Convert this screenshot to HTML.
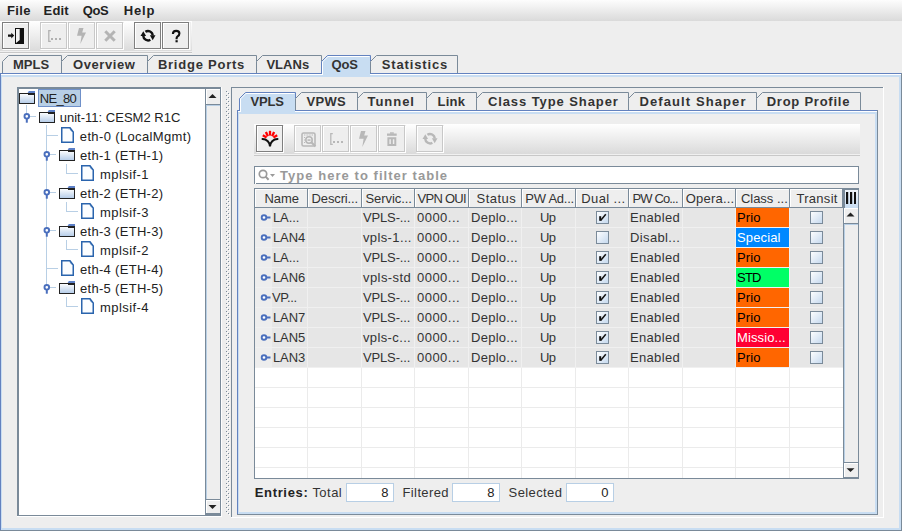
<!DOCTYPE html><html><head><meta charset="utf-8"><style>html,body{margin:0;padding:0;width:902px;height:531px;overflow:hidden;background:#eeeeee;}body{position:relative;font-family:"Liberation Sans",sans-serif;}body div,body svg{position:absolute;box-sizing:border-box;}</style></head><body>
<div style="left:0px;top:0px;width:902px;height:21px;background:linear-gradient(#fdfdfd,#dadada)"></div>
<div style="left:7.00px;top:3px;line-height:15px;font-size:13px;color:#222;letter-spacing:0.333px;white-space:pre;font-weight:bold;">File</div>
<div style="left:43.60px;top:3px;line-height:15px;font-size:13px;color:#222;letter-spacing:0.133px;white-space:pre;font-weight:bold;">Edit</div>
<div style="left:82.80px;top:3px;line-height:15px;font-size:13px;color:#222;letter-spacing:-0.400px;white-space:pre;font-weight:bold;">QoS</div>
<div style="left:123.70px;top:3px;line-height:15px;font-size:13px;color:#222;letter-spacing:0.833px;white-space:pre;font-weight:bold;">Help</div>
<div style="left:0px;top:21px;width:192px;height:31px;background:linear-gradient(#ffffff,#dadada)"></div>
<div style="left:0px;top:51px;width:192px;height:1px;background:#f0f0f0"></div>
<div style="left:0px;top:52px;width:192px;height:1px;background:#c8c8c8"></div>
<div style="left:0px;top:53px;width:192px;height:1px;background:#f6f6f6"></div>
<div style="left:2px;top:22px;width:28px;height:28px;background:#eeeeee"></div>
<div style="left:40px;top:22px;width:84px;height:28px;background:#eeeeee"></div>
<div style="left:134px;top:22px;width:57px;height:28px;background:#eeeeee"></div>
<div style="left:3px;top:23px;width:27px;height:27px;box-shadow:inset 0 0 0 1px #ffffff"></div>
<div style="left:2px;top:22px;width:27px;height:27px;box-shadow:inset 0 0 0 1px #7f7f7f"></div>
<div style="left:41px;top:23px;width:27px;height:27px;box-shadow:inset 0 0 0 1px #ffffff"></div>
<div style="left:40px;top:22px;width:27px;height:27px;box-shadow:inset 0 0 0 1px #c8c8c8"></div>
<div style="left:69px;top:23px;width:27px;height:27px;box-shadow:inset 0 0 0 1px #ffffff"></div>
<div style="left:68px;top:22px;width:27px;height:27px;box-shadow:inset 0 0 0 1px #c8c8c8"></div>
<div style="left:97px;top:23px;width:27px;height:27px;box-shadow:inset 0 0 0 1px #ffffff"></div>
<div style="left:96px;top:22px;width:27px;height:27px;box-shadow:inset 0 0 0 1px #c8c8c8"></div>
<div style="left:135px;top:23px;width:27px;height:27px;box-shadow:inset 0 0 0 1px #ffffff"></div>
<div style="left:134px;top:22px;width:27px;height:27px;box-shadow:inset 0 0 0 1px #7f7f7f"></div>
<div style="left:163px;top:23px;width:27px;height:27px;box-shadow:inset 0 0 0 1px #ffffff"></div>
<div style="left:162px;top:22px;width:27px;height:27px;box-shadow:inset 0 0 0 1px #7f7f7f"></div>
<svg style="left:2px;top:22px" width="27" height="27" viewBox="0 0 27 27"><rect x="13" y="6" width="9" height="16" fill="#111"/><polygon points="14,7 17.7,7 17.7,18 14,21" fill="#f2f2f2"/><polygon points="6,12.4 9.3,12.4 9.3,10.7 12.2,13.6 9.3,16.5 9.3,14.8 6,14.8" fill="#111"/></svg>
<svg style="left:40px;top:22px" width="27" height="27" viewBox="0 0 27 27"><path d="M10.8 8.6 H8.8 V19.4 H10.8" stroke="#b0b0b0" stroke-width="1.3" fill="none"/><rect x="11" y="16" width="2" height="2" fill="#b0b0b0"/><rect x="15" y="16" width="2" height="2" fill="#b0b0b0"/><rect x="19" y="16" width="2" height="2" fill="#b0b0b0"/></svg>
<svg style="left:68px;top:22px" width="27" height="27" viewBox="0 0 27 27"><polygon points="11,6 15.5,6 14.2,10.5 18,10.5 12.3,22 13.6,13.8 9,13.8" fill="#b4b4b4"/></svg>
<svg style="left:96px;top:22px" width="27" height="27" viewBox="0 0 27 27"><path d="M9.3 9.3 L18.7 18.7 M18.7 9.3 L9.3 18.7" stroke="#b4b4b4" stroke-width="3"/></svg>
<svg style="left:134px;top:22px" width="27" height="27" viewBox="0 0 27 27"><path d="M11.39 9.79 A4.7 4.7 0 0 1 18.7 13.5" stroke="#111" stroke-width="2.4" fill="none"/><path d="M16.35 17.77 A4.7 4.7 0 0 1 9.3 13.9" stroke="#111" stroke-width="2.4" fill="none"/><polygon points="15.9,13.3 21.5,13.3 18.7,18.2" fill="#111"/><polygon points="6.5,14.1 12.1,14.1 9.3,9.2" fill="#111"/></svg>
<svg style="left:162px;top:22px" width="27" height="27" viewBox="0 0 27 27"><path d="M10.9 12.1 Q10.9 8.9 14.2 8.9 Q17.4 8.9 17.4 11.6 Q17.4 13.3 15.6 14.4 Q14.6 15.1 14.6 16.3 V17.2" stroke="#111" stroke-width="2.1" fill="none"/><rect x="13.5" y="18.2" width="2.2" height="2.1" fill="#111"/></svg>
<div style="left:0px;top:74px;width:902px;height:457px;background:#eeeeee"></div>
<svg style="left:2px;top:55px" width="60" height="20" viewBox="0 0 60 20"><polygon points="0.5,6.5 6.5,0.5 59.5,0.5 59.5,19 0.5,19" fill="#eeeeee" stroke="#7a8a99" stroke-width="1"/></svg>
<div style="left:13.00px;top:57px;line-height:15px;font-size:13px;color:#333333;letter-spacing:0.000px;white-space:pre;font-weight:bold;">MPLS</div>
<svg style="left:61px;top:55px" width="87" height="20" viewBox="0 0 87 20"><polygon points="0.5,6.5 6.5,0.5 86.5,0.5 86.5,19 0.5,19" fill="#eeeeee" stroke="#7a8a99" stroke-width="1"/></svg>
<div style="left:73.00px;top:57px;line-height:15px;font-size:13px;color:#333333;letter-spacing:0.571px;white-space:pre;font-weight:bold;">Overview</div>
<svg style="left:147px;top:55px" width="110" height="20" viewBox="0 0 110 20"><polygon points="0.5,6.5 6.5,0.5 109.5,0.5 109.5,19 0.5,19" fill="#eeeeee" stroke="#7a8a99" stroke-width="1"/></svg>
<div style="left:157.90px;top:57px;line-height:15px;font-size:13px;color:#333333;letter-spacing:0.764px;white-space:pre;font-weight:bold;">Bridge Ports</div>
<svg style="left:256px;top:55px" width="66" height="20" viewBox="0 0 66 20"><polygon points="0.5,6.5 6.5,0.5 65.5,0.5 65.5,19 0.5,19" fill="#eeeeee" stroke="#7a8a99" stroke-width="1"/></svg>
<div style="left:266.40px;top:57px;line-height:15px;font-size:13px;color:#333333;letter-spacing:0.050px;white-space:pre;font-weight:bold;">VLANs</div>
<svg style="left:321px;top:55px" width="50" height="20" viewBox="0 0 50 20"><polygon points="0.5,6.5 6.5,0.5 49.5,0.5 49.5,19 0.5,19" fill="#c8ddf2" stroke="#6382bf" stroke-width="1"/><polyline points="1.5,20 1.5,6.9 6.9,1.5 48.5,1.5" fill="none" stroke="#fff" stroke-width="1"/></svg>
<div style="left:331.60px;top:57px;line-height:15px;font-size:13px;color:#333333;letter-spacing:-0.200px;white-space:pre;font-weight:bold;">QoS</div>
<svg style="left:370px;top:55px" width="88" height="20" viewBox="0 0 88 20"><polygon points="0.5,6.5 6.5,0.5 87.5,0.5 87.5,19 0.5,19" fill="#eeeeee" stroke="#7a8a99" stroke-width="1"/></svg>
<div style="left:381.80px;top:57px;line-height:15px;font-size:13px;color:#333333;letter-spacing:0.856px;white-space:pre;font-weight:bold;">Statistics</div>
<div style="left:0px;top:73px;width:902px;height:1px;background:#6382bf"></div>
<div style="left:1px;top:74px;width:900px;height:1px;background:#ffffff"></div>
<div style="left:1px;top:75px;width:900px;height:2px;background:#c8ddf2"></div>
<div style="left:0px;top:73px;width:1px;height:458px;background:#6382bf"></div>
<div style="left:1px;top:75px;width:1px;height:455px;background:#c8ddf2"></div>
<div style="left:899px;top:75px;width:2px;height:455px;background:#c8ddf2"></div>
<div style="left:901px;top:73px;width:1px;height:458px;background:#7a8a99"></div>
<div style="left:1px;top:528px;width:900px;height:2px;background:#c8ddf2"></div>
<div style="left:0px;top:530px;width:902px;height:1px;background:#7a8a99"></div>
<div style="left:322px;top:73px;width:48px;height:4px;background:#c8ddf2"></div>
<div style="left:322px;top:73px;width:1px;height:2px;background:#ffffff"></div>
<div style="left:1px;top:74px;width:322px;height:1px;background:#ffffff"></div>
<div style="left:19px;top:89px;width:186px;height:426px;background:#ffffff"></div>
<div style="left:17px;top:87px;width:204px;height:2px;background:#7a8a99"></div>
<div style="left:17px;top:87px;width:2px;height:429px;background:#7a8a99"></div>
<div style="left:17px;top:515px;width:204px;height:1px;background:#7a8a99"></div>
<div style="left:221px;top:87px;width:1px;height:430px;background:#ffffff"></div>
<div style="left:17px;top:516px;width:205px;height:1px;background:#ffffff"></div>
<div style="left:205px;top:89px;width:16px;height:426px;background:#eeeeee"></div>
<div style="left:205px;top:89px;width:1px;height:426px;background:#7a8a99"></div>
<div style="left:220px;top:87px;width:1px;height:429px;background:#7a8a99"></div>
<div style="left:206px;top:89px;width:14px;height:15px;background:#eeeeee"></div>
<div style="left:206px;top:89px;width:14px;height:1px;background:#ffffff"></div>
<div style="left:206px;top:89px;width:1px;height:15px;background:#ffffff"></div>
<div style="left:206px;top:104px;width:14px;height:1px;background:#7a8a99"></div>
<div style="left:206px;top:105px;width:1px;height:394px;background:#b8cfe5"></div>
<div style="left:207px;top:105px;width:13px;height:1px;background:#b8cfe5"></div>
<svg style="left:206px;top:89px" width="14" height="15" viewBox="0 0 14 15"><polygon points="2.5,9 10.5,9 6.5,5" fill="#222"/></svg>
<div style="left:206px;top:499px;width:14px;height:1px;background:#7a8a99"></div>
<div style="left:206px;top:500px;width:14px;height:13px;background:#eeeeee"></div>
<div style="left:206px;top:500px;width:14px;height:1px;background:#ffffff"></div>
<div style="left:206px;top:500px;width:1px;height:13px;background:#ffffff"></div>
<div style="left:205px;top:513px;width:16px;height:2px;background:#7a8a99"></div>
<svg style="left:206px;top:500px" width="14" height="13" viewBox="0 0 14 13"><polygon points="2.5,5 10.5,5 6.5,9" fill="#222"/></svg>
<div style="left:26px;top:105px;width:1px;height:12px;background:#b8cfe5"></div>
<div style="left:46px;top:125px;width:1px;height:164px;background:#b8cfe5"></div>
<div style="left:38px;top:89px;width:43px;height:18px;background:#b8cfe5"></div>
<div style="left:38px;top:89px;width:43px;height:18px;box-shadow:inset 0 0 0 1px #6f90c9"></div>
<svg style="left:19px;top:91px" width="16" height="13" viewBox="0 0 16 13"><defs><linearGradient id="fg" x1="0" y1="0" x2="0" y2="1"><stop offset="0" stop-color="#fff"/><stop offset="1" stop-color="#b3cbe8"/></linearGradient></defs><rect x="0.5" y="2.5" width="15" height="10" fill="url(#fg)" stroke="#222" stroke-width="1"/><polygon points="8.6,2 9.8,0 16,0 16,2" fill="#5b7fc7"/><path d="M9 3.5 H15.5" stroke="#222" stroke-width="1"/></svg>
<div style="left:39.80px;top:91px;line-height:15px;font-size:13px;color:#222;letter-spacing:-0.675px;white-space:pre;">NE_80</div>
<div style="left:27px;top:116px;width:9px;height:1px;background:#b8cfe5"></div>
<svg style="left:39px;top:110px" width="16" height="13" viewBox="0 0 16 13"><defs><linearGradient id="fg" x1="0" y1="0" x2="0" y2="1"><stop offset="0" stop-color="#fff"/><stop offset="1" stop-color="#b3cbe8"/></linearGradient></defs><rect x="0.5" y="2.5" width="15" height="10" fill="url(#fg)" stroke="#222" stroke-width="1"/><polygon points="8.6,2 9.8,0 16,0 16,2" fill="#5b7fc7"/><path d="M9 3.5 H15.5" stroke="#222" stroke-width="1"/></svg>
<svg style="left:22px;top:112px" width="9" height="12" viewBox="0 0 9 12"><circle cx="4.8" cy="4.3" r="2.3" fill="#fff" stroke="#4a6fbd" stroke-width="1.9"/><rect x="3.8" y="6.5" width="2" height="4.2" fill="#4a6fbd"/></svg>
<div style="left:59.70px;top:110px;line-height:15px;font-size:13px;color:#222;letter-spacing:0.012px;white-space:pre;">unit-11: CESM2 R1C</div>
<div style="left:47px;top:135px;width:11px;height:1px;background:#b8cfe5"></div>
<svg style="left:61px;top:127px" width="13" height="16" viewBox="0 0 13 16"><polygon points="0.75,0.75 9,0.75 12.25,5 12.25,15.25 0.75,15.25" fill="#fbfdff" stroke="#2a64ad" stroke-width="1.5"/><path d="M8.8 1.8 L11.2 5" stroke="#2a64ad" stroke-width="1" stroke-dasharray="1,0.8"/></svg>
<div style="left:79.80px;top:129px;line-height:15px;font-size:13px;color:#222;letter-spacing:0.362px;white-space:pre;">eth-0 (LocalMgmt)</div>
<div style="left:47px;top:154px;width:9px;height:1px;background:#b8cfe5"></div>
<svg style="left:59px;top:148px" width="16" height="13" viewBox="0 0 16 13"><defs><linearGradient id="fg" x1="0" y1="0" x2="0" y2="1"><stop offset="0" stop-color="#fff"/><stop offset="1" stop-color="#b3cbe8"/></linearGradient></defs><rect x="0.5" y="2.5" width="15" height="10" fill="url(#fg)" stroke="#222" stroke-width="1"/><polygon points="8.6,2 9.8,0 16,0 16,2" fill="#5b7fc7"/><path d="M9 3.5 H15.5" stroke="#222" stroke-width="1"/></svg>
<svg style="left:42px;top:150px" width="9" height="12" viewBox="0 0 9 12"><circle cx="4.8" cy="4.3" r="2.3" fill="#fff" stroke="#4a6fbd" stroke-width="1.9"/><rect x="3.8" y="6.5" width="2" height="4.2" fill="#4a6fbd"/></svg>
<div style="left:80.00px;top:148px;line-height:15px;font-size:13px;color:#222;letter-spacing:0.302px;white-space:pre;">eth-1 (ETH-1)</div>
<div style="left:67px;top:173px;width:11px;height:1px;background:#b8cfe5"></div>
<div style="left:66px;top:164px;width:1px;height:10px;background:#b8cfe5"></div>
<svg style="left:81px;top:165px" width="13" height="16" viewBox="0 0 13 16"><polygon points="0.75,0.75 9,0.75 12.25,5 12.25,15.25 0.75,15.25" fill="#fbfdff" stroke="#2a64ad" stroke-width="1.5"/><path d="M8.8 1.8 L11.2 5" stroke="#2a64ad" stroke-width="1" stroke-dasharray="1,0.8"/></svg>
<div style="left:100.00px;top:167px;line-height:15px;font-size:13px;color:#222;letter-spacing:0.423px;white-space:pre;">mplsif-1</div>
<div style="left:47px;top:192px;width:9px;height:1px;background:#b8cfe5"></div>
<svg style="left:59px;top:186px" width="16" height="13" viewBox="0 0 16 13"><defs><linearGradient id="fg" x1="0" y1="0" x2="0" y2="1"><stop offset="0" stop-color="#fff"/><stop offset="1" stop-color="#b3cbe8"/></linearGradient></defs><rect x="0.5" y="2.5" width="15" height="10" fill="url(#fg)" stroke="#222" stroke-width="1"/><polygon points="8.6,2 9.8,0 16,0 16,2" fill="#5b7fc7"/><path d="M9 3.5 H15.5" stroke="#222" stroke-width="1"/></svg>
<svg style="left:42px;top:188px" width="9" height="12" viewBox="0 0 9 12"><circle cx="4.8" cy="4.3" r="2.3" fill="#fff" stroke="#4a6fbd" stroke-width="1.9"/><rect x="3.8" y="6.5" width="2" height="4.2" fill="#4a6fbd"/></svg>
<div style="left:80.00px;top:186px;line-height:15px;font-size:13px;color:#222;letter-spacing:0.302px;white-space:pre;">eth-2 (ETH-2)</div>
<div style="left:67px;top:211px;width:11px;height:1px;background:#b8cfe5"></div>
<div style="left:66px;top:202px;width:1px;height:10px;background:#b8cfe5"></div>
<svg style="left:81px;top:203px" width="13" height="16" viewBox="0 0 13 16"><polygon points="0.75,0.75 9,0.75 12.25,5 12.25,15.25 0.75,15.25" fill="#fbfdff" stroke="#2a64ad" stroke-width="1.5"/><path d="M8.8 1.8 L11.2 5" stroke="#2a64ad" stroke-width="1" stroke-dasharray="1,0.8"/></svg>
<div style="left:100.00px;top:205px;line-height:15px;font-size:13px;color:#222;letter-spacing:0.423px;white-space:pre;">mplsif-3</div>
<div style="left:47px;top:230px;width:9px;height:1px;background:#b8cfe5"></div>
<svg style="left:59px;top:224px" width="16" height="13" viewBox="0 0 16 13"><defs><linearGradient id="fg" x1="0" y1="0" x2="0" y2="1"><stop offset="0" stop-color="#fff"/><stop offset="1" stop-color="#b3cbe8"/></linearGradient></defs><rect x="0.5" y="2.5" width="15" height="10" fill="url(#fg)" stroke="#222" stroke-width="1"/><polygon points="8.6,2 9.8,0 16,0 16,2" fill="#5b7fc7"/><path d="M9 3.5 H15.5" stroke="#222" stroke-width="1"/></svg>
<svg style="left:42px;top:226px" width="9" height="12" viewBox="0 0 9 12"><circle cx="4.8" cy="4.3" r="2.3" fill="#fff" stroke="#4a6fbd" stroke-width="1.9"/><rect x="3.8" y="6.5" width="2" height="4.2" fill="#4a6fbd"/></svg>
<div style="left:80.00px;top:224px;line-height:15px;font-size:13px;color:#222;letter-spacing:0.302px;white-space:pre;">eth-3 (ETH-3)</div>
<div style="left:67px;top:249px;width:11px;height:1px;background:#b8cfe5"></div>
<div style="left:66px;top:240px;width:1px;height:10px;background:#b8cfe5"></div>
<svg style="left:81px;top:241px" width="13" height="16" viewBox="0 0 13 16"><polygon points="0.75,0.75 9,0.75 12.25,5 12.25,15.25 0.75,15.25" fill="#fbfdff" stroke="#2a64ad" stroke-width="1.5"/><path d="M8.8 1.8 L11.2 5" stroke="#2a64ad" stroke-width="1" stroke-dasharray="1,0.8"/></svg>
<div style="left:100.00px;top:243px;line-height:15px;font-size:13px;color:#222;letter-spacing:0.423px;white-space:pre;">mplsif-2</div>
<div style="left:47px;top:268px;width:11px;height:1px;background:#b8cfe5"></div>
<svg style="left:61px;top:260px" width="13" height="16" viewBox="0 0 13 16"><polygon points="0.75,0.75 9,0.75 12.25,5 12.25,15.25 0.75,15.25" fill="#fbfdff" stroke="#2a64ad" stroke-width="1.5"/><path d="M8.8 1.8 L11.2 5" stroke="#2a64ad" stroke-width="1" stroke-dasharray="1,0.8"/></svg>
<div style="left:80.00px;top:262px;line-height:15px;font-size:13px;color:#222;letter-spacing:0.302px;white-space:pre;">eth-4 (ETH-4)</div>
<div style="left:47px;top:287px;width:9px;height:1px;background:#b8cfe5"></div>
<svg style="left:59px;top:281px" width="16" height="13" viewBox="0 0 16 13"><defs><linearGradient id="fg" x1="0" y1="0" x2="0" y2="1"><stop offset="0" stop-color="#fff"/><stop offset="1" stop-color="#b3cbe8"/></linearGradient></defs><rect x="0.5" y="2.5" width="15" height="10" fill="url(#fg)" stroke="#222" stroke-width="1"/><polygon points="8.6,2 9.8,0 16,0 16,2" fill="#5b7fc7"/><path d="M9 3.5 H15.5" stroke="#222" stroke-width="1"/></svg>
<svg style="left:42px;top:283px" width="9" height="12" viewBox="0 0 9 12"><circle cx="4.8" cy="4.3" r="2.3" fill="#fff" stroke="#4a6fbd" stroke-width="1.9"/><rect x="3.8" y="6.5" width="2" height="4.2" fill="#4a6fbd"/></svg>
<div style="left:80.00px;top:281px;line-height:15px;font-size:13px;color:#222;letter-spacing:0.302px;white-space:pre;">eth-5 (ETH-5)</div>
<div style="left:67px;top:306px;width:11px;height:1px;background:#b8cfe5"></div>
<div style="left:66px;top:297px;width:1px;height:10px;background:#b8cfe5"></div>
<svg style="left:81px;top:298px" width="13" height="16" viewBox="0 0 13 16"><polygon points="0.75,0.75 9,0.75 12.25,5 12.25,15.25 0.75,15.25" fill="#fbfdff" stroke="#2a64ad" stroke-width="1.5"/><path d="M8.8 1.8 L11.2 5" stroke="#2a64ad" stroke-width="1" stroke-dasharray="1,0.8"/></svg>
<div style="left:100.00px;top:300px;line-height:15px;font-size:13px;color:#222;letter-spacing:0.423px;white-space:pre;">mplsif-4</div>
<svg style="left:226px;top:87px" width="4" height="430"><rect x="0" y="4" width="1" height="1" fill="#7a8a99"/><rect x="2" y="6" width="1" height="1" fill="#7a8a99"/><rect x="1" y="5" width="1" height="1" fill="#fff"/><rect x="3" y="7" width="1" height="1" fill="#fff"/><rect x="0" y="8" width="1" height="1" fill="#7a8a99"/><rect x="2" y="10" width="1" height="1" fill="#7a8a99"/><rect x="1" y="9" width="1" height="1" fill="#fff"/><rect x="3" y="11" width="1" height="1" fill="#fff"/><rect x="0" y="12" width="1" height="1" fill="#7a8a99"/><rect x="2" y="14" width="1" height="1" fill="#7a8a99"/><rect x="1" y="13" width="1" height="1" fill="#fff"/><rect x="3" y="15" width="1" height="1" fill="#fff"/><rect x="0" y="16" width="1" height="1" fill="#7a8a99"/><rect x="2" y="18" width="1" height="1" fill="#7a8a99"/><rect x="1" y="17" width="1" height="1" fill="#fff"/><rect x="3" y="19" width="1" height="1" fill="#fff"/><rect x="0" y="20" width="1" height="1" fill="#7a8a99"/><rect x="2" y="22" width="1" height="1" fill="#7a8a99"/><rect x="1" y="21" width="1" height="1" fill="#fff"/><rect x="3" y="23" width="1" height="1" fill="#fff"/><rect x="0" y="24" width="1" height="1" fill="#7a8a99"/><rect x="2" y="26" width="1" height="1" fill="#7a8a99"/><rect x="1" y="25" width="1" height="1" fill="#fff"/><rect x="3" y="27" width="1" height="1" fill="#fff"/><rect x="0" y="28" width="1" height="1" fill="#7a8a99"/><rect x="2" y="30" width="1" height="1" fill="#7a8a99"/><rect x="1" y="29" width="1" height="1" fill="#fff"/><rect x="3" y="31" width="1" height="1" fill="#fff"/><rect x="0" y="32" width="1" height="1" fill="#7a8a99"/><rect x="2" y="34" width="1" height="1" fill="#7a8a99"/><rect x="1" y="33" width="1" height="1" fill="#fff"/><rect x="3" y="35" width="1" height="1" fill="#fff"/><rect x="0" y="36" width="1" height="1" fill="#7a8a99"/><rect x="2" y="38" width="1" height="1" fill="#7a8a99"/><rect x="1" y="37" width="1" height="1" fill="#fff"/><rect x="3" y="39" width="1" height="1" fill="#fff"/><rect x="0" y="40" width="1" height="1" fill="#7a8a99"/><rect x="2" y="42" width="1" height="1" fill="#7a8a99"/><rect x="1" y="41" width="1" height="1" fill="#fff"/><rect x="3" y="43" width="1" height="1" fill="#fff"/><rect x="0" y="44" width="1" height="1" fill="#7a8a99"/><rect x="2" y="46" width="1" height="1" fill="#7a8a99"/><rect x="1" y="45" width="1" height="1" fill="#fff"/><rect x="3" y="47" width="1" height="1" fill="#fff"/><rect x="0" y="48" width="1" height="1" fill="#7a8a99"/><rect x="2" y="50" width="1" height="1" fill="#7a8a99"/><rect x="1" y="49" width="1" height="1" fill="#fff"/><rect x="3" y="51" width="1" height="1" fill="#fff"/><rect x="0" y="52" width="1" height="1" fill="#7a8a99"/><rect x="2" y="54" width="1" height="1" fill="#7a8a99"/><rect x="1" y="53" width="1" height="1" fill="#fff"/><rect x="3" y="55" width="1" height="1" fill="#fff"/><rect x="0" y="56" width="1" height="1" fill="#7a8a99"/><rect x="2" y="58" width="1" height="1" fill="#7a8a99"/><rect x="1" y="57" width="1" height="1" fill="#fff"/><rect x="3" y="59" width="1" height="1" fill="#fff"/><rect x="0" y="60" width="1" height="1" fill="#7a8a99"/><rect x="2" y="62" width="1" height="1" fill="#7a8a99"/><rect x="1" y="61" width="1" height="1" fill="#fff"/><rect x="3" y="63" width="1" height="1" fill="#fff"/><rect x="0" y="64" width="1" height="1" fill="#7a8a99"/><rect x="2" y="66" width="1" height="1" fill="#7a8a99"/><rect x="1" y="65" width="1" height="1" fill="#fff"/><rect x="3" y="67" width="1" height="1" fill="#fff"/><rect x="0" y="68" width="1" height="1" fill="#7a8a99"/><rect x="2" y="70" width="1" height="1" fill="#7a8a99"/><rect x="1" y="69" width="1" height="1" fill="#fff"/><rect x="3" y="71" width="1" height="1" fill="#fff"/><rect x="0" y="72" width="1" height="1" fill="#7a8a99"/><rect x="2" y="74" width="1" height="1" fill="#7a8a99"/><rect x="1" y="73" width="1" height="1" fill="#fff"/><rect x="3" y="75" width="1" height="1" fill="#fff"/><rect x="0" y="76" width="1" height="1" fill="#7a8a99"/><rect x="2" y="78" width="1" height="1" fill="#7a8a99"/><rect x="1" y="77" width="1" height="1" fill="#fff"/><rect x="3" y="79" width="1" height="1" fill="#fff"/><rect x="0" y="80" width="1" height="1" fill="#7a8a99"/><rect x="2" y="82" width="1" height="1" fill="#7a8a99"/><rect x="1" y="81" width="1" height="1" fill="#fff"/><rect x="3" y="83" width="1" height="1" fill="#fff"/><rect x="0" y="84" width="1" height="1" fill="#7a8a99"/><rect x="2" y="86" width="1" height="1" fill="#7a8a99"/><rect x="1" y="85" width="1" height="1" fill="#fff"/><rect x="3" y="87" width="1" height="1" fill="#fff"/><rect x="0" y="88" width="1" height="1" fill="#7a8a99"/><rect x="2" y="90" width="1" height="1" fill="#7a8a99"/><rect x="1" y="89" width="1" height="1" fill="#fff"/><rect x="3" y="91" width="1" height="1" fill="#fff"/><rect x="0" y="92" width="1" height="1" fill="#7a8a99"/><rect x="2" y="94" width="1" height="1" fill="#7a8a99"/><rect x="1" y="93" width="1" height="1" fill="#fff"/><rect x="3" y="95" width="1" height="1" fill="#fff"/><rect x="0" y="96" width="1" height="1" fill="#7a8a99"/><rect x="2" y="98" width="1" height="1" fill="#7a8a99"/><rect x="1" y="97" width="1" height="1" fill="#fff"/><rect x="3" y="99" width="1" height="1" fill="#fff"/><rect x="0" y="100" width="1" height="1" fill="#7a8a99"/><rect x="2" y="102" width="1" height="1" fill="#7a8a99"/><rect x="1" y="101" width="1" height="1" fill="#fff"/><rect x="3" y="103" width="1" height="1" fill="#fff"/><rect x="0" y="104" width="1" height="1" fill="#7a8a99"/><rect x="2" y="106" width="1" height="1" fill="#7a8a99"/><rect x="1" y="105" width="1" height="1" fill="#fff"/><rect x="3" y="107" width="1" height="1" fill="#fff"/><rect x="0" y="108" width="1" height="1" fill="#7a8a99"/><rect x="2" y="110" width="1" height="1" fill="#7a8a99"/><rect x="1" y="109" width="1" height="1" fill="#fff"/><rect x="3" y="111" width="1" height="1" fill="#fff"/><rect x="0" y="112" width="1" height="1" fill="#7a8a99"/><rect x="2" y="114" width="1" height="1" fill="#7a8a99"/><rect x="1" y="113" width="1" height="1" fill="#fff"/><rect x="3" y="115" width="1" height="1" fill="#fff"/><rect x="0" y="116" width="1" height="1" fill="#7a8a99"/><rect x="2" y="118" width="1" height="1" fill="#7a8a99"/><rect x="1" y="117" width="1" height="1" fill="#fff"/><rect x="3" y="119" width="1" height="1" fill="#fff"/><rect x="0" y="120" width="1" height="1" fill="#7a8a99"/><rect x="2" y="122" width="1" height="1" fill="#7a8a99"/><rect x="1" y="121" width="1" height="1" fill="#fff"/><rect x="3" y="123" width="1" height="1" fill="#fff"/><rect x="0" y="124" width="1" height="1" fill="#7a8a99"/><rect x="2" y="126" width="1" height="1" fill="#7a8a99"/><rect x="1" y="125" width="1" height="1" fill="#fff"/><rect x="3" y="127" width="1" height="1" fill="#fff"/><rect x="0" y="128" width="1" height="1" fill="#7a8a99"/><rect x="2" y="130" width="1" height="1" fill="#7a8a99"/><rect x="1" y="129" width="1" height="1" fill="#fff"/><rect x="3" y="131" width="1" height="1" fill="#fff"/><rect x="0" y="132" width="1" height="1" fill="#7a8a99"/><rect x="2" y="134" width="1" height="1" fill="#7a8a99"/><rect x="1" y="133" width="1" height="1" fill="#fff"/><rect x="3" y="135" width="1" height="1" fill="#fff"/><rect x="0" y="136" width="1" height="1" fill="#7a8a99"/><rect x="2" y="138" width="1" height="1" fill="#7a8a99"/><rect x="1" y="137" width="1" height="1" fill="#fff"/><rect x="3" y="139" width="1" height="1" fill="#fff"/><rect x="0" y="140" width="1" height="1" fill="#7a8a99"/><rect x="2" y="142" width="1" height="1" fill="#7a8a99"/><rect x="1" y="141" width="1" height="1" fill="#fff"/><rect x="3" y="143" width="1" height="1" fill="#fff"/><rect x="0" y="144" width="1" height="1" fill="#7a8a99"/><rect x="2" y="146" width="1" height="1" fill="#7a8a99"/><rect x="1" y="145" width="1" height="1" fill="#fff"/><rect x="3" y="147" width="1" height="1" fill="#fff"/><rect x="0" y="148" width="1" height="1" fill="#7a8a99"/><rect x="2" y="150" width="1" height="1" fill="#7a8a99"/><rect x="1" y="149" width="1" height="1" fill="#fff"/><rect x="3" y="151" width="1" height="1" fill="#fff"/><rect x="0" y="152" width="1" height="1" fill="#7a8a99"/><rect x="2" y="154" width="1" height="1" fill="#7a8a99"/><rect x="1" y="153" width="1" height="1" fill="#fff"/><rect x="3" y="155" width="1" height="1" fill="#fff"/><rect x="0" y="156" width="1" height="1" fill="#7a8a99"/><rect x="2" y="158" width="1" height="1" fill="#7a8a99"/><rect x="1" y="157" width="1" height="1" fill="#fff"/><rect x="3" y="159" width="1" height="1" fill="#fff"/><rect x="0" y="160" width="1" height="1" fill="#7a8a99"/><rect x="2" y="162" width="1" height="1" fill="#7a8a99"/><rect x="1" y="161" width="1" height="1" fill="#fff"/><rect x="3" y="163" width="1" height="1" fill="#fff"/><rect x="0" y="164" width="1" height="1" fill="#7a8a99"/><rect x="2" y="166" width="1" height="1" fill="#7a8a99"/><rect x="1" y="165" width="1" height="1" fill="#fff"/><rect x="3" y="167" width="1" height="1" fill="#fff"/><rect x="0" y="168" width="1" height="1" fill="#7a8a99"/><rect x="2" y="170" width="1" height="1" fill="#7a8a99"/><rect x="1" y="169" width="1" height="1" fill="#fff"/><rect x="3" y="171" width="1" height="1" fill="#fff"/><rect x="0" y="172" width="1" height="1" fill="#7a8a99"/><rect x="2" y="174" width="1" height="1" fill="#7a8a99"/><rect x="1" y="173" width="1" height="1" fill="#fff"/><rect x="3" y="175" width="1" height="1" fill="#fff"/><rect x="0" y="176" width="1" height="1" fill="#7a8a99"/><rect x="2" y="178" width="1" height="1" fill="#7a8a99"/><rect x="1" y="177" width="1" height="1" fill="#fff"/><rect x="3" y="179" width="1" height="1" fill="#fff"/><rect x="0" y="180" width="1" height="1" fill="#7a8a99"/><rect x="2" y="182" width="1" height="1" fill="#7a8a99"/><rect x="1" y="181" width="1" height="1" fill="#fff"/><rect x="3" y="183" width="1" height="1" fill="#fff"/><rect x="0" y="184" width="1" height="1" fill="#7a8a99"/><rect x="2" y="186" width="1" height="1" fill="#7a8a99"/><rect x="1" y="185" width="1" height="1" fill="#fff"/><rect x="3" y="187" width="1" height="1" fill="#fff"/><rect x="0" y="188" width="1" height="1" fill="#7a8a99"/><rect x="2" y="190" width="1" height="1" fill="#7a8a99"/><rect x="1" y="189" width="1" height="1" fill="#fff"/><rect x="3" y="191" width="1" height="1" fill="#fff"/><rect x="0" y="192" width="1" height="1" fill="#7a8a99"/><rect x="2" y="194" width="1" height="1" fill="#7a8a99"/><rect x="1" y="193" width="1" height="1" fill="#fff"/><rect x="3" y="195" width="1" height="1" fill="#fff"/><rect x="0" y="196" width="1" height="1" fill="#7a8a99"/><rect x="2" y="198" width="1" height="1" fill="#7a8a99"/><rect x="1" y="197" width="1" height="1" fill="#fff"/><rect x="3" y="199" width="1" height="1" fill="#fff"/><rect x="0" y="200" width="1" height="1" fill="#7a8a99"/><rect x="2" y="202" width="1" height="1" fill="#7a8a99"/><rect x="1" y="201" width="1" height="1" fill="#fff"/><rect x="3" y="203" width="1" height="1" fill="#fff"/><rect x="0" y="204" width="1" height="1" fill="#7a8a99"/><rect x="2" y="206" width="1" height="1" fill="#7a8a99"/><rect x="1" y="205" width="1" height="1" fill="#fff"/><rect x="3" y="207" width="1" height="1" fill="#fff"/><rect x="0" y="208" width="1" height="1" fill="#7a8a99"/><rect x="2" y="210" width="1" height="1" fill="#7a8a99"/><rect x="1" y="209" width="1" height="1" fill="#fff"/><rect x="3" y="211" width="1" height="1" fill="#fff"/><rect x="0" y="212" width="1" height="1" fill="#7a8a99"/><rect x="2" y="214" width="1" height="1" fill="#7a8a99"/><rect x="1" y="213" width="1" height="1" fill="#fff"/><rect x="3" y="215" width="1" height="1" fill="#fff"/><rect x="0" y="216" width="1" height="1" fill="#7a8a99"/><rect x="2" y="218" width="1" height="1" fill="#7a8a99"/><rect x="1" y="217" width="1" height="1" fill="#fff"/><rect x="3" y="219" width="1" height="1" fill="#fff"/><rect x="0" y="220" width="1" height="1" fill="#7a8a99"/><rect x="2" y="222" width="1" height="1" fill="#7a8a99"/><rect x="1" y="221" width="1" height="1" fill="#fff"/><rect x="3" y="223" width="1" height="1" fill="#fff"/><rect x="0" y="224" width="1" height="1" fill="#7a8a99"/><rect x="2" y="226" width="1" height="1" fill="#7a8a99"/><rect x="1" y="225" width="1" height="1" fill="#fff"/><rect x="3" y="227" width="1" height="1" fill="#fff"/><rect x="0" y="228" width="1" height="1" fill="#7a8a99"/><rect x="2" y="230" width="1" height="1" fill="#7a8a99"/><rect x="1" y="229" width="1" height="1" fill="#fff"/><rect x="3" y="231" width="1" height="1" fill="#fff"/><rect x="0" y="232" width="1" height="1" fill="#7a8a99"/><rect x="2" y="234" width="1" height="1" fill="#7a8a99"/><rect x="1" y="233" width="1" height="1" fill="#fff"/><rect x="3" y="235" width="1" height="1" fill="#fff"/><rect x="0" y="236" width="1" height="1" fill="#7a8a99"/><rect x="2" y="238" width="1" height="1" fill="#7a8a99"/><rect x="1" y="237" width="1" height="1" fill="#fff"/><rect x="3" y="239" width="1" height="1" fill="#fff"/><rect x="0" y="240" width="1" height="1" fill="#7a8a99"/><rect x="2" y="242" width="1" height="1" fill="#7a8a99"/><rect x="1" y="241" width="1" height="1" fill="#fff"/><rect x="3" y="243" width="1" height="1" fill="#fff"/><rect x="0" y="244" width="1" height="1" fill="#7a8a99"/><rect x="2" y="246" width="1" height="1" fill="#7a8a99"/><rect x="1" y="245" width="1" height="1" fill="#fff"/><rect x="3" y="247" width="1" height="1" fill="#fff"/><rect x="0" y="248" width="1" height="1" fill="#7a8a99"/><rect x="2" y="250" width="1" height="1" fill="#7a8a99"/><rect x="1" y="249" width="1" height="1" fill="#fff"/><rect x="3" y="251" width="1" height="1" fill="#fff"/><rect x="0" y="252" width="1" height="1" fill="#7a8a99"/><rect x="2" y="254" width="1" height="1" fill="#7a8a99"/><rect x="1" y="253" width="1" height="1" fill="#fff"/><rect x="3" y="255" width="1" height="1" fill="#fff"/><rect x="0" y="256" width="1" height="1" fill="#7a8a99"/><rect x="2" y="258" width="1" height="1" fill="#7a8a99"/><rect x="1" y="257" width="1" height="1" fill="#fff"/><rect x="3" y="259" width="1" height="1" fill="#fff"/><rect x="0" y="260" width="1" height="1" fill="#7a8a99"/><rect x="2" y="262" width="1" height="1" fill="#7a8a99"/><rect x="1" y="261" width="1" height="1" fill="#fff"/><rect x="3" y="263" width="1" height="1" fill="#fff"/><rect x="0" y="264" width="1" height="1" fill="#7a8a99"/><rect x="2" y="266" width="1" height="1" fill="#7a8a99"/><rect x="1" y="265" width="1" height="1" fill="#fff"/><rect x="3" y="267" width="1" height="1" fill="#fff"/><rect x="0" y="268" width="1" height="1" fill="#7a8a99"/><rect x="2" y="270" width="1" height="1" fill="#7a8a99"/><rect x="1" y="269" width="1" height="1" fill="#fff"/><rect x="3" y="271" width="1" height="1" fill="#fff"/><rect x="0" y="272" width="1" height="1" fill="#7a8a99"/><rect x="2" y="274" width="1" height="1" fill="#7a8a99"/><rect x="1" y="273" width="1" height="1" fill="#fff"/><rect x="3" y="275" width="1" height="1" fill="#fff"/><rect x="0" y="276" width="1" height="1" fill="#7a8a99"/><rect x="2" y="278" width="1" height="1" fill="#7a8a99"/><rect x="1" y="277" width="1" height="1" fill="#fff"/><rect x="3" y="279" width="1" height="1" fill="#fff"/><rect x="0" y="280" width="1" height="1" fill="#7a8a99"/><rect x="2" y="282" width="1" height="1" fill="#7a8a99"/><rect x="1" y="281" width="1" height="1" fill="#fff"/><rect x="3" y="283" width="1" height="1" fill="#fff"/><rect x="0" y="284" width="1" height="1" fill="#7a8a99"/><rect x="2" y="286" width="1" height="1" fill="#7a8a99"/><rect x="1" y="285" width="1" height="1" fill="#fff"/><rect x="3" y="287" width="1" height="1" fill="#fff"/><rect x="0" y="288" width="1" height="1" fill="#7a8a99"/><rect x="2" y="290" width="1" height="1" fill="#7a8a99"/><rect x="1" y="289" width="1" height="1" fill="#fff"/><rect x="3" y="291" width="1" height="1" fill="#fff"/><rect x="0" y="292" width="1" height="1" fill="#7a8a99"/><rect x="2" y="294" width="1" height="1" fill="#7a8a99"/><rect x="1" y="293" width="1" height="1" fill="#fff"/><rect x="3" y="295" width="1" height="1" fill="#fff"/><rect x="0" y="296" width="1" height="1" fill="#7a8a99"/><rect x="2" y="298" width="1" height="1" fill="#7a8a99"/><rect x="1" y="297" width="1" height="1" fill="#fff"/><rect x="3" y="299" width="1" height="1" fill="#fff"/><rect x="0" y="300" width="1" height="1" fill="#7a8a99"/><rect x="2" y="302" width="1" height="1" fill="#7a8a99"/><rect x="1" y="301" width="1" height="1" fill="#fff"/><rect x="3" y="303" width="1" height="1" fill="#fff"/><rect x="0" y="304" width="1" height="1" fill="#7a8a99"/><rect x="2" y="306" width="1" height="1" fill="#7a8a99"/><rect x="1" y="305" width="1" height="1" fill="#fff"/><rect x="3" y="307" width="1" height="1" fill="#fff"/><rect x="0" y="308" width="1" height="1" fill="#7a8a99"/><rect x="2" y="310" width="1" height="1" fill="#7a8a99"/><rect x="1" y="309" width="1" height="1" fill="#fff"/><rect x="3" y="311" width="1" height="1" fill="#fff"/><rect x="0" y="312" width="1" height="1" fill="#7a8a99"/><rect x="2" y="314" width="1" height="1" fill="#7a8a99"/><rect x="1" y="313" width="1" height="1" fill="#fff"/><rect x="3" y="315" width="1" height="1" fill="#fff"/><rect x="0" y="316" width="1" height="1" fill="#7a8a99"/><rect x="2" y="318" width="1" height="1" fill="#7a8a99"/><rect x="1" y="317" width="1" height="1" fill="#fff"/><rect x="3" y="319" width="1" height="1" fill="#fff"/><rect x="0" y="320" width="1" height="1" fill="#7a8a99"/><rect x="2" y="322" width="1" height="1" fill="#7a8a99"/><rect x="1" y="321" width="1" height="1" fill="#fff"/><rect x="3" y="323" width="1" height="1" fill="#fff"/><rect x="0" y="324" width="1" height="1" fill="#7a8a99"/><rect x="2" y="326" width="1" height="1" fill="#7a8a99"/><rect x="1" y="325" width="1" height="1" fill="#fff"/><rect x="3" y="327" width="1" height="1" fill="#fff"/><rect x="0" y="328" width="1" height="1" fill="#7a8a99"/><rect x="2" y="330" width="1" height="1" fill="#7a8a99"/><rect x="1" y="329" width="1" height="1" fill="#fff"/><rect x="3" y="331" width="1" height="1" fill="#fff"/><rect x="0" y="332" width="1" height="1" fill="#7a8a99"/><rect x="2" y="334" width="1" height="1" fill="#7a8a99"/><rect x="1" y="333" width="1" height="1" fill="#fff"/><rect x="3" y="335" width="1" height="1" fill="#fff"/><rect x="0" y="336" width="1" height="1" fill="#7a8a99"/><rect x="2" y="338" width="1" height="1" fill="#7a8a99"/><rect x="1" y="337" width="1" height="1" fill="#fff"/><rect x="3" y="339" width="1" height="1" fill="#fff"/><rect x="0" y="340" width="1" height="1" fill="#7a8a99"/><rect x="2" y="342" width="1" height="1" fill="#7a8a99"/><rect x="1" y="341" width="1" height="1" fill="#fff"/><rect x="3" y="343" width="1" height="1" fill="#fff"/><rect x="0" y="344" width="1" height="1" fill="#7a8a99"/><rect x="2" y="346" width="1" height="1" fill="#7a8a99"/><rect x="1" y="345" width="1" height="1" fill="#fff"/><rect x="3" y="347" width="1" height="1" fill="#fff"/><rect x="0" y="348" width="1" height="1" fill="#7a8a99"/><rect x="2" y="350" width="1" height="1" fill="#7a8a99"/><rect x="1" y="349" width="1" height="1" fill="#fff"/><rect x="3" y="351" width="1" height="1" fill="#fff"/><rect x="0" y="352" width="1" height="1" fill="#7a8a99"/><rect x="2" y="354" width="1" height="1" fill="#7a8a99"/><rect x="1" y="353" width="1" height="1" fill="#fff"/><rect x="3" y="355" width="1" height="1" fill="#fff"/><rect x="0" y="356" width="1" height="1" fill="#7a8a99"/><rect x="2" y="358" width="1" height="1" fill="#7a8a99"/><rect x="1" y="357" width="1" height="1" fill="#fff"/><rect x="3" y="359" width="1" height="1" fill="#fff"/><rect x="0" y="360" width="1" height="1" fill="#7a8a99"/><rect x="2" y="362" width="1" height="1" fill="#7a8a99"/><rect x="1" y="361" width="1" height="1" fill="#fff"/><rect x="3" y="363" width="1" height="1" fill="#fff"/><rect x="0" y="364" width="1" height="1" fill="#7a8a99"/><rect x="2" y="366" width="1" height="1" fill="#7a8a99"/><rect x="1" y="365" width="1" height="1" fill="#fff"/><rect x="3" y="367" width="1" height="1" fill="#fff"/><rect x="0" y="368" width="1" height="1" fill="#7a8a99"/><rect x="2" y="370" width="1" height="1" fill="#7a8a99"/><rect x="1" y="369" width="1" height="1" fill="#fff"/><rect x="3" y="371" width="1" height="1" fill="#fff"/><rect x="0" y="372" width="1" height="1" fill="#7a8a99"/><rect x="2" y="374" width="1" height="1" fill="#7a8a99"/><rect x="1" y="373" width="1" height="1" fill="#fff"/><rect x="3" y="375" width="1" height="1" fill="#fff"/><rect x="0" y="376" width="1" height="1" fill="#7a8a99"/><rect x="2" y="378" width="1" height="1" fill="#7a8a99"/><rect x="1" y="377" width="1" height="1" fill="#fff"/><rect x="3" y="379" width="1" height="1" fill="#fff"/><rect x="0" y="380" width="1" height="1" fill="#7a8a99"/><rect x="2" y="382" width="1" height="1" fill="#7a8a99"/><rect x="1" y="381" width="1" height="1" fill="#fff"/><rect x="3" y="383" width="1" height="1" fill="#fff"/><rect x="0" y="384" width="1" height="1" fill="#7a8a99"/><rect x="2" y="386" width="1" height="1" fill="#7a8a99"/><rect x="1" y="385" width="1" height="1" fill="#fff"/><rect x="3" y="387" width="1" height="1" fill="#fff"/><rect x="0" y="388" width="1" height="1" fill="#7a8a99"/><rect x="2" y="390" width="1" height="1" fill="#7a8a99"/><rect x="1" y="389" width="1" height="1" fill="#fff"/><rect x="3" y="391" width="1" height="1" fill="#fff"/><rect x="0" y="392" width="1" height="1" fill="#7a8a99"/><rect x="2" y="394" width="1" height="1" fill="#7a8a99"/><rect x="1" y="393" width="1" height="1" fill="#fff"/><rect x="3" y="395" width="1" height="1" fill="#fff"/><rect x="0" y="396" width="1" height="1" fill="#7a8a99"/><rect x="2" y="398" width="1" height="1" fill="#7a8a99"/><rect x="1" y="397" width="1" height="1" fill="#fff"/><rect x="3" y="399" width="1" height="1" fill="#fff"/><rect x="0" y="400" width="1" height="1" fill="#7a8a99"/><rect x="2" y="402" width="1" height="1" fill="#7a8a99"/><rect x="1" y="401" width="1" height="1" fill="#fff"/><rect x="3" y="403" width="1" height="1" fill="#fff"/><rect x="0" y="404" width="1" height="1" fill="#7a8a99"/><rect x="2" y="406" width="1" height="1" fill="#7a8a99"/><rect x="1" y="405" width="1" height="1" fill="#fff"/><rect x="3" y="407" width="1" height="1" fill="#fff"/><rect x="0" y="408" width="1" height="1" fill="#7a8a99"/><rect x="2" y="410" width="1" height="1" fill="#7a8a99"/><rect x="1" y="409" width="1" height="1" fill="#fff"/><rect x="3" y="411" width="1" height="1" fill="#fff"/><rect x="0" y="412" width="1" height="1" fill="#7a8a99"/><rect x="2" y="414" width="1" height="1" fill="#7a8a99"/><rect x="1" y="413" width="1" height="1" fill="#fff"/><rect x="3" y="415" width="1" height="1" fill="#fff"/><rect x="0" y="416" width="1" height="1" fill="#7a8a99"/><rect x="2" y="418" width="1" height="1" fill="#7a8a99"/><rect x="1" y="417" width="1" height="1" fill="#fff"/><rect x="3" y="419" width="1" height="1" fill="#fff"/><rect x="0" y="420" width="1" height="1" fill="#7a8a99"/><rect x="2" y="422" width="1" height="1" fill="#7a8a99"/><rect x="1" y="421" width="1" height="1" fill="#fff"/><rect x="3" y="423" width="1" height="1" fill="#fff"/><rect x="0" y="424" width="1" height="1" fill="#7a8a99"/><rect x="2" y="426" width="1" height="1" fill="#7a8a99"/><rect x="1" y="425" width="1" height="1" fill="#fff"/><rect x="3" y="427" width="1" height="1" fill="#fff"/></svg>
<div style="left:231px;top:87px;width:652px;height:1px;background:#7a8a99"></div>
<div style="left:231px;top:87px;width:1px;height:430px;background:#7a8a99"></div>
<div style="left:883px;top:87px;width:1px;height:431px;background:#ffffff"></div>
<div style="left:231px;top:517px;width:653px;height:1px;background:#ffffff"></div>
<div style="left:238px;top:111px;width:639px;height:403px;background:#eeeeee"></div>
<svg style="left:239px;top:92px" width="57" height="20" viewBox="0 0 57 20"><polygon points="0.5,6.5 6.5,0.5 56.5,0.5 56.5,19 0.5,19" fill="#c8ddf2" stroke="#6382bf" stroke-width="1"/><polyline points="1.5,20 1.5,6.9 6.9,1.5 55.5,1.5" fill="none" stroke="#fff" stroke-width="1"/></svg>
<div style="left:250.40px;top:94px;line-height:15px;font-size:13px;color:#333333;letter-spacing:-0.133px;white-space:pre;font-weight:bold;">VPLS</div>
<svg style="left:295px;top:92px" width="63" height="20" viewBox="0 0 63 20"><polygon points="0.5,6.5 6.5,0.5 62.5,0.5 62.5,19 0.5,19" fill="#eeeeee" stroke="#7a8a99" stroke-width="1"/></svg>
<div style="left:306.40px;top:94px;line-height:15px;font-size:13px;color:#333333;letter-spacing:0.367px;white-space:pre;font-weight:bold;">VPWS</div>
<svg style="left:357px;top:92px" width="70" height="20" viewBox="0 0 70 20"><polygon points="0.5,6.5 6.5,0.5 69.5,0.5 69.5,19 0.5,19" fill="#eeeeee" stroke="#7a8a99" stroke-width="1"/></svg>
<div style="left:367.50px;top:94px;line-height:15px;font-size:13px;color:#333333;letter-spacing:0.960px;white-space:pre;font-weight:bold;">Tunnel</div>
<svg style="left:426px;top:92px" width="51" height="20" viewBox="0 0 51 20"><polygon points="0.5,6.5 6.5,0.5 50.5,0.5 50.5,19 0.5,19" fill="#eeeeee" stroke="#7a8a99" stroke-width="1"/></svg>
<div style="left:437.50px;top:94px;line-height:15px;font-size:13px;color:#333333;letter-spacing:0.267px;white-space:pre;font-weight:bold;">Link</div>
<svg style="left:476px;top:92px" width="153" height="20" viewBox="0 0 153 20"><polygon points="0.5,6.5 6.5,0.5 152.5,0.5 152.5,19 0.5,19" fill="#eeeeee" stroke="#7a8a99" stroke-width="1"/></svg>
<div style="left:487.90px;top:94px;line-height:15px;font-size:13px;color:#333333;letter-spacing:0.913px;white-space:pre;font-weight:bold;">Class Type Shaper</div>
<svg style="left:628px;top:92px" width="129" height="20" viewBox="0 0 129 20"><polygon points="0.5,6.5 6.5,0.5 128.5,0.5 128.5,19 0.5,19" fill="#eeeeee" stroke="#7a8a99" stroke-width="1"/></svg>
<div style="left:639.50px;top:94px;line-height:15px;font-size:13px;color:#333333;letter-spacing:1.092px;white-space:pre;font-weight:bold;">Default Shaper</div>
<svg style="left:756px;top:92px" width="105" height="20" viewBox="0 0 105 20"><polygon points="0.5,6.5 6.5,0.5 104.5,0.5 104.5,19 0.5,19" fill="#eeeeee" stroke="#7a8a99" stroke-width="1"/></svg>
<div style="left:766.70px;top:94px;line-height:15px;font-size:13px;color:#333333;letter-spacing:0.755px;white-space:pre;font-weight:bold;">Drop Profile</div>
<div style="left:237px;top:110px;width:641px;height:1px;background:#6382bf"></div>
<div style="left:238px;top:111px;width:639px;height:1px;background:#ffffff"></div>
<div style="left:238px;top:112px;width:639px;height:2px;background:#c8ddf2"></div>
<div style="left:237px;top:110px;width:1px;height:405px;background:#6382bf"></div>
<div style="left:238px;top:112px;width:1px;height:402px;background:#c8ddf2"></div>
<div style="left:875px;top:112px;width:2px;height:402px;background:#c8ddf2"></div>
<div style="left:877px;top:110px;width:1px;height:405px;background:#7a8a99"></div>
<div style="left:238px;top:512px;width:639px;height:2px;background:#c8ddf2"></div>
<div style="left:237px;top:514px;width:641px;height:1px;background:#7a8a99"></div>
<div style="left:240px;top:110px;width:55px;height:4px;background:#c8ddf2"></div>
<div style="left:239px;top:110px;width:1px;height:1px;background:#6382bf"></div>
<div style="left:240px;top:110px;width:1px;height:2px;background:#ffffff"></div>
<div style="left:295px;top:110px;width:1px;height:1px;background:#6382bf"></div>
<div style="left:254px;top:124px;width:606px;height:30px;background:linear-gradient(#ffffff,#dadada)"></div>
<div style="left:254px;top:154px;width:606px;height:1px;background:#f0f0f0"></div>
<div style="left:254px;top:155px;width:606px;height:1px;background:#c8c8c8"></div>
<div style="left:256px;top:125px;width:28px;height:28px;background:#eeeeee"></div>
<div style="left:294px;top:125px;width:112px;height:28px;background:#eeeeee"></div>
<div style="left:416px;top:125px;width:28px;height:28px;background:#eeeeee"></div>
<div style="left:257px;top:126px;width:27px;height:27px;box-shadow:inset 0 0 0 1px #ffffff"></div>
<div style="left:256px;top:125px;width:27px;height:27px;box-shadow:inset 0 0 0 1px #7f7f7f"></div>
<div style="left:295px;top:126px;width:27px;height:27px;box-shadow:inset 0 0 0 1px #ffffff"></div>
<div style="left:294px;top:125px;width:27px;height:27px;box-shadow:inset 0 0 0 1px #c8c8c8"></div>
<div style="left:323px;top:126px;width:27px;height:27px;box-shadow:inset 0 0 0 1px #ffffff"></div>
<div style="left:322px;top:125px;width:27px;height:27px;box-shadow:inset 0 0 0 1px #c8c8c8"></div>
<div style="left:351px;top:126px;width:27px;height:27px;box-shadow:inset 0 0 0 1px #ffffff"></div>
<div style="left:350px;top:125px;width:27px;height:27px;box-shadow:inset 0 0 0 1px #c8c8c8"></div>
<div style="left:379px;top:126px;width:27px;height:27px;box-shadow:inset 0 0 0 1px #ffffff"></div>
<div style="left:378px;top:125px;width:27px;height:27px;box-shadow:inset 0 0 0 1px #c8c8c8"></div>
<div style="left:417px;top:126px;width:27px;height:27px;box-shadow:inset 0 0 0 1px #ffffff"></div>
<div style="left:416px;top:125px;width:27px;height:27px;box-shadow:inset 0 0 0 1px #c8c8c8"></div>
<svg style="left:256px;top:125px" width="27" height="27" viewBox="0 0 27 27"><path d="M6.5 14 A7.5 7.5 0 0 1 14 21.5 A7.5 7.5 0 0 1 21.5 14" stroke="#111" stroke-width="2" fill="none" stroke-linecap="round"/><g stroke="#f00" stroke-width="2.3" stroke-linecap="butt"><path d="M6.8 10.3 L10.6 12.5"/><path d="M9.9 6.9 L11.9 11.3"/><path d="M14 5.8 L14 10.6"/><path d="M18.1 6.9 L16.1 11.3"/><path d="M21.2 10.3 L17.4 12.5"/></g></svg>
<svg style="left:294px;top:125px" width="27" height="27" viewBox="0 0 27 27"><rect x="8" y="8" width="13" height="13" rx="1.5" fill="none" stroke="#b8b8b8" stroke-width="1.6"/><path d="M10 10 H19" stroke="#b8b8b8" stroke-width="1" stroke-dasharray="1,0.6"/><path d="M10.5 12 V19" stroke="#b8b8b8" stroke-width="1" stroke-dasharray="1,1.5"/><circle cx="15" cy="15" r="3.2" fill="#eee" stroke="#b8b8b8" stroke-width="1.6"/><rect x="13.5" y="14.3" width="3" height="1.6" fill="#b8b8b8"/><path d="M17.3 17.3 L21.5 21.5" stroke="#b8b8b8" stroke-width="2.2"/></svg>
<svg style="left:322px;top:125px" width="27" height="27" viewBox="0 0 27 27"><path d="M10.8 8.6 H8.8 V19.4 H10.8" stroke="#b8b8b8" stroke-width="1.3" fill="none"/><rect x="11" y="16" width="2" height="2" fill="#b8b8b8"/><rect x="15" y="16" width="2" height="2" fill="#b8b8b8"/><rect x="19" y="16" width="2" height="2" fill="#b8b8b8"/></svg>
<svg style="left:350px;top:125px" width="27" height="27" viewBox="0 0 27 27"><polygon points="11,6 15.5,6 14.2,10.5 18,10.5 12.3,22 13.6,13.8 9,13.8" fill="#b8b8b8"/></svg>
<svg style="left:378px;top:125px" width="27" height="27" viewBox="0 0 27 27"><rect x="9" y="8.5" width="9.7" height="2.3" fill="#b8b8b8"/><rect x="12" y="7.3" width="3.8" height="1.5" fill="#b8b8b8"/><path d="M10.4 13.3 H17.3 V20.1 H10.4 Z M13.85 13.3 V20.1" stroke="#b8b8b8" stroke-width="2" fill="none"/></svg>
<svg style="left:416px;top:125px" width="27" height="27" viewBox="0 0 27 27"><path d="M11.39 9.79 A4.7 4.7 0 0 1 18.7 13.5" stroke="#b8b8b8" stroke-width="2.4" fill="none"/><path d="M16.35 17.77 A4.7 4.7 0 0 1 9.3 13.9" stroke="#b8b8b8" stroke-width="2.4" fill="none"/><polygon points="15.9,13.3 21.5,13.3 18.7,18.2" fill="#b8b8b8"/><polygon points="6.5,14.1 12.1,14.1 9.3,9.2" fill="#b8b8b8"/></svg>
<div style="left:254px;top:166px;width:605px;height:18px;background:#ffffff"></div>
<div style="left:254px;top:166px;width:605px;height:1px;background:#7a8a99"></div>
<div style="left:254px;top:166px;width:1px;height:18px;background:#7a8a99"></div>
<div style="left:256px;top:183px;width:603px;height:1px;background:#7a8a99"></div>
<div style="left:858px;top:166px;width:1px;height:18px;background:#7a8a99"></div>
<svg style="left:256px;top:168px" width="22" height="14" viewBox="0 0 22 14"><circle cx="7" cy="6" r="3.7" fill="none" stroke="#9a9a9a" stroke-width="1.7"/><path d="M9.6 8.6 L12.6 11.8" stroke="#9a9a9a" stroke-width="2"/><polygon points="14,6 19,6 16.5,9" fill="#9a9a9a"/></svg>
<div style="left:280.10px;top:168px;line-height:15px;font-size:13px;color:#999999;letter-spacing:1.037px;white-space:pre;font-weight:bold;">Type here to filter table</div>
<div style="left:254px;top:188px;width:605px;height:291px;background:#ffffff"></div>
<div style="left:255px;top:189px;width:588px;height:18px;background:#eeeeee"></div>
<div style="left:254px;top:188px;width:605px;height:1px;background:#7a8a99"></div>
<div style="left:255px;top:207px;width:588px;height:1px;background:#7a8a99"></div>
<div style="left:255px;top:189px;width:587px;height:1px;background:#ffffff"></div>
<div style="left:255px;top:189px;width:1px;height:18px;background:#ffffff"></div>
<div style="left:307px;top:189px;width:1px;height:19px;background:#7a8a99"></div>
<div style="left:308px;top:189px;width:1px;height:18px;background:#ffffff"></div>
<div style="left:361px;top:189px;width:1px;height:19px;background:#7a8a99"></div>
<div style="left:362px;top:189px;width:1px;height:18px;background:#ffffff"></div>
<div style="left:414px;top:189px;width:1px;height:19px;background:#7a8a99"></div>
<div style="left:415px;top:189px;width:1px;height:18px;background:#ffffff"></div>
<div style="left:468px;top:189px;width:1px;height:19px;background:#7a8a99"></div>
<div style="left:469px;top:189px;width:1px;height:18px;background:#ffffff"></div>
<div style="left:521px;top:189px;width:1px;height:19px;background:#7a8a99"></div>
<div style="left:522px;top:189px;width:1px;height:18px;background:#ffffff"></div>
<div style="left:575px;top:189px;width:1px;height:19px;background:#7a8a99"></div>
<div style="left:576px;top:189px;width:1px;height:18px;background:#ffffff"></div>
<div style="left:628px;top:189px;width:1px;height:19px;background:#7a8a99"></div>
<div style="left:629px;top:189px;width:1px;height:18px;background:#ffffff"></div>
<div style="left:682px;top:189px;width:1px;height:19px;background:#7a8a99"></div>
<div style="left:683px;top:189px;width:1px;height:18px;background:#ffffff"></div>
<div style="left:735px;top:189px;width:1px;height:19px;background:#7a8a99"></div>
<div style="left:736px;top:189px;width:1px;height:18px;background:#ffffff"></div>
<div style="left:789px;top:189px;width:1px;height:19px;background:#7a8a99"></div>
<div style="left:790px;top:189px;width:1px;height:18px;background:#ffffff"></div>
<div style="left:842px;top:189px;width:1px;height:19px;background:#7a8a99"></div>
<div style="left:843px;top:189px;width:1px;height:18px;background:#ffffff"></div>
<div style="left:264.50px;top:191px;line-height:15px;font-size:13px;color:#333333;letter-spacing:-0.067px;white-space:pre;">Name</div>
<div style="left:311.60px;top:191px;line-height:15px;font-size:13px;color:#333333;letter-spacing:-0.138px;white-space:pre;">Descri...</div>
<div style="left:365.50px;top:191px;line-height:15px;font-size:13px;color:#333333;letter-spacing:-0.062px;white-space:pre;">Servic...</div>
<div style="left:415px;top:189px;width:53px;height:18px;overflow:hidden"><div style="left:2.60px;top:2px;line-height:15px;font-size:13px;color:#333333;letter-spacing:-0.760px;white-space:pre">VPN OUI</div></div>
<div style="left:476.50px;top:191px;line-height:15px;font-size:13px;color:#333333;letter-spacing:0.460px;white-space:pre;">Status</div>
<div style="left:525.30px;top:191px;line-height:15px;font-size:13px;color:#333333;letter-spacing:-0.243px;white-space:pre;">PW Ad...</div>
<div style="left:581.30px;top:191px;line-height:15px;font-size:13px;color:#333333;letter-spacing:0.386px;white-space:pre;">Dual ...</div>
<div style="left:632.40px;top:191px;line-height:15px;font-size:13px;color:#333333;letter-spacing:-0.843px;white-space:pre;">PW Co...</div>
<div style="left:685.80px;top:191px;line-height:15px;font-size:13px;color:#333333;letter-spacing:0.200px;white-space:pre;">Opera...</div>
<div style="left:740.90px;top:191px;line-height:15px;font-size:13px;color:#333333;letter-spacing:-0.013px;white-space:pre;">Class ...</div>
<div style="left:796.40px;top:191px;line-height:15px;font-size:13px;color:#333333;letter-spacing:0.300px;white-space:pre;">Transit</div>
<div style="left:843px;top:188px;width:16px;height:20px;background:linear-gradient(#f4f7fb,#c8ddf2)"></div>
<div style="left:843px;top:188px;width:16px;height:2px;background:#7a8a99"></div>
<div style="left:843px;top:188px;width:2px;height:20px;background:#7a8a99"></div>
<div style="left:858px;top:188px;width:1px;height:20px;background:#7a8a99"></div>
<svg style="left:846px;top:192px" width="10" height="13" viewBox="0 0 10 13"><rect x="0" y="0" width="2.2" height="12" fill="#111"/><rect x="4" y="0" width="2.2" height="12" fill="#111"/><rect x="8" y="0" width="2.2" height="12" fill="#111"/></svg>
<div style="left:255px;top:208px;width:588px;height:160px;background:#e6e6e6"></div>
<div style="left:255px;top:227px;width:588px;height:1px;background:#f0f0f0"></div>
<div style="left:255px;top:247px;width:588px;height:1px;background:#f0f0f0"></div>
<div style="left:255px;top:267px;width:588px;height:1px;background:#f0f0f0"></div>
<div style="left:255px;top:287px;width:588px;height:1px;background:#f0f0f0"></div>
<div style="left:255px;top:307px;width:588px;height:1px;background:#f0f0f0"></div>
<div style="left:255px;top:327px;width:588px;height:1px;background:#f0f0f0"></div>
<div style="left:255px;top:347px;width:588px;height:1px;background:#f0f0f0"></div>
<div style="left:255px;top:367px;width:588px;height:1px;background:#f0f0f0"></div>
<div style="left:255px;top:387px;width:588px;height:1px;background:#ebebeb"></div>
<div style="left:255px;top:407px;width:588px;height:1px;background:#ebebeb"></div>
<div style="left:255px;top:427px;width:588px;height:1px;background:#ebebeb"></div>
<div style="left:255px;top:447px;width:588px;height:1px;background:#ebebeb"></div>
<div style="left:255px;top:467px;width:588px;height:1px;background:#ebebeb"></div>
<div style="left:307px;top:208px;width:1px;height:160px;background:#f0f0f0"></div>
<div style="left:307px;top:368px;width:1px;height:110px;background:#ebebeb"></div>
<div style="left:361px;top:208px;width:1px;height:160px;background:#f0f0f0"></div>
<div style="left:361px;top:368px;width:1px;height:110px;background:#ebebeb"></div>
<div style="left:414px;top:208px;width:1px;height:160px;background:#f0f0f0"></div>
<div style="left:414px;top:368px;width:1px;height:110px;background:#ebebeb"></div>
<div style="left:468px;top:208px;width:1px;height:160px;background:#f0f0f0"></div>
<div style="left:468px;top:368px;width:1px;height:110px;background:#ebebeb"></div>
<div style="left:521px;top:208px;width:1px;height:160px;background:#f0f0f0"></div>
<div style="left:521px;top:368px;width:1px;height:110px;background:#ebebeb"></div>
<div style="left:575px;top:208px;width:1px;height:160px;background:#f0f0f0"></div>
<div style="left:575px;top:368px;width:1px;height:110px;background:#ebebeb"></div>
<div style="left:628px;top:208px;width:1px;height:160px;background:#f0f0f0"></div>
<div style="left:628px;top:368px;width:1px;height:110px;background:#ebebeb"></div>
<div style="left:682px;top:208px;width:1px;height:160px;background:#f0f0f0"></div>
<div style="left:682px;top:368px;width:1px;height:110px;background:#ebebeb"></div>
<div style="left:735px;top:208px;width:1px;height:160px;background:#f0f0f0"></div>
<div style="left:735px;top:368px;width:1px;height:110px;background:#ebebeb"></div>
<div style="left:789px;top:208px;width:1px;height:160px;background:#f0f0f0"></div>
<div style="left:789px;top:368px;width:1px;height:110px;background:#ebebeb"></div>
<div style="left:255px;top:208px;width:17px;height:160px;background:#ededed"></div>
<div style="left:255px;top:227px;width:17px;height:1px;background:#f0f0f0"></div>
<div style="left:255px;top:247px;width:17px;height:1px;background:#f0f0f0"></div>
<div style="left:255px;top:267px;width:17px;height:1px;background:#f0f0f0"></div>
<div style="left:255px;top:287px;width:17px;height:1px;background:#f0f0f0"></div>
<div style="left:255px;top:307px;width:17px;height:1px;background:#f0f0f0"></div>
<div style="left:255px;top:327px;width:17px;height:1px;background:#f0f0f0"></div>
<div style="left:255px;top:347px;width:17px;height:1px;background:#f0f0f0"></div>
<div style="left:255px;top:367px;width:17px;height:1px;background:#f0f0f0"></div>
<svg style="left:259px;top:213px" width="13" height="9" viewBox="0 0 13 9"><circle cx="5" cy="4.5" r="2.3" fill="#fff" stroke="#4a6fbd" stroke-width="1.9"/><rect x="7" y="3.5" width="4.5" height="2" fill="#4a6fbd"/></svg>
<div style="left:273.00px;top:210px;line-height:15px;font-size:13px;color:#333333;letter-spacing:-0.120px;white-space:pre;">LA...</div>
<div style="left:363.00px;top:210px;line-height:15px;font-size:13px;color:#333333;letter-spacing:-0.154px;white-space:pre;">VPLS-...</div>
<div style="left:417.00px;top:210px;line-height:15px;font-size:13px;color:#333333;letter-spacing:0.473px;white-space:pre;">0000...</div>
<div style="left:471.00px;top:210px;line-height:15px;font-size:13px;color:#333333;letter-spacing:0.274px;white-space:pre;">Deplo...</div>
<div style="left:540.00px;top:210px;line-height:15px;font-size:13px;color:#333333;letter-spacing:-0.680px;white-space:pre;">Up</div>
<svg style="left:596px;top:211px" width="13" height="13" viewBox="0 0 13 13"><defs><linearGradient id="cb" x1="0" y1="0" x2="1" y2="1"><stop offset="0" stop-color="#fff"/><stop offset="1" stop-color="#c4d8ee"/></linearGradient></defs><rect x="0.5" y="0.5" width="12" height="12" fill="url(#cb)" stroke="#7a8a99"/><rect x="3.2" y="5.2" width="2" height="4.6" fill="#111"/><path d="M4.6 9.5 L9.8 3.2" stroke="#111" stroke-width="1.5" fill="none"/></svg>
<div style="left:630.00px;top:210px;line-height:15px;font-size:13px;color:#333333;letter-spacing:0.330px;white-space:pre;">Enabled</div>
<div style="left:736px;top:208px;width:53px;height:19px;background:#ff6600"></div>
<div style="left:737.00px;top:210px;line-height:15px;font-size:13px;color:#000;letter-spacing:0.153px;white-space:pre;">Prio</div>
<svg style="left:810px;top:211px" width="13" height="13" viewBox="0 0 13 13"><defs><linearGradient id="cb" x1="0" y1="0" x2="1" y2="1"><stop offset="0" stop-color="#fff"/><stop offset="1" stop-color="#c4d8ee"/></linearGradient></defs><rect x="0.5" y="0.5" width="12" height="12" fill="url(#cb)" stroke="#7a8a99"/></svg>
<svg style="left:259px;top:233px" width="13" height="9" viewBox="0 0 13 9"><circle cx="5" cy="4.5" r="2.3" fill="#fff" stroke="#4a6fbd" stroke-width="1.9"/><rect x="7" y="3.5" width="4.5" height="2" fill="#4a6fbd"/></svg>
<div style="left:273.00px;top:230px;line-height:15px;font-size:13px;color:#333333;letter-spacing:-0.120px;white-space:pre;">LAN4</div>
<div style="left:363.00px;top:230px;line-height:15px;font-size:13px;color:#333333;letter-spacing:0.370px;white-space:pre;">vpls-1...</div>
<div style="left:417.00px;top:230px;line-height:15px;font-size:13px;color:#333333;letter-spacing:0.473px;white-space:pre;">0000...</div>
<div style="left:471.00px;top:230px;line-height:15px;font-size:13px;color:#333333;letter-spacing:0.274px;white-space:pre;">Deplo...</div>
<div style="left:540.00px;top:230px;line-height:15px;font-size:13px;color:#333333;letter-spacing:-0.680px;white-space:pre;">Up</div>
<svg style="left:596px;top:231px" width="13" height="13" viewBox="0 0 13 13"><defs><linearGradient id="cb" x1="0" y1="0" x2="1" y2="1"><stop offset="0" stop-color="#fff"/><stop offset="1" stop-color="#c4d8ee"/></linearGradient></defs><rect x="0.5" y="0.5" width="12" height="12" fill="url(#cb)" stroke="#7a8a99"/></svg>
<div style="left:630.00px;top:230px;line-height:15px;font-size:13px;color:#333333;letter-spacing:0.373px;white-space:pre;">Disabl...</div>
<div style="left:736px;top:228px;width:53px;height:19px;background:#0088ff"></div>
<div style="left:737.00px;top:230px;line-height:15px;font-size:13px;color:#fff;letter-spacing:0.143px;white-space:pre;">Special</div>
<svg style="left:810px;top:231px" width="13" height="13" viewBox="0 0 13 13"><defs><linearGradient id="cb" x1="0" y1="0" x2="1" y2="1"><stop offset="0" stop-color="#fff"/><stop offset="1" stop-color="#c4d8ee"/></linearGradient></defs><rect x="0.5" y="0.5" width="12" height="12" fill="url(#cb)" stroke="#7a8a99"/></svg>
<svg style="left:259px;top:253px" width="13" height="9" viewBox="0 0 13 9"><circle cx="5" cy="4.5" r="2.3" fill="#fff" stroke="#4a6fbd" stroke-width="1.9"/><rect x="7" y="3.5" width="4.5" height="2" fill="#4a6fbd"/></svg>
<div style="left:273.00px;top:250px;line-height:15px;font-size:13px;color:#333333;letter-spacing:-0.120px;white-space:pre;">LA...</div>
<div style="left:363.00px;top:250px;line-height:15px;font-size:13px;color:#333333;letter-spacing:-0.154px;white-space:pre;">VPLS-...</div>
<div style="left:417.00px;top:250px;line-height:15px;font-size:13px;color:#333333;letter-spacing:0.473px;white-space:pre;">0000...</div>
<div style="left:471.00px;top:250px;line-height:15px;font-size:13px;color:#333333;letter-spacing:0.274px;white-space:pre;">Deplo...</div>
<div style="left:540.00px;top:250px;line-height:15px;font-size:13px;color:#333333;letter-spacing:-0.680px;white-space:pre;">Up</div>
<svg style="left:596px;top:251px" width="13" height="13" viewBox="0 0 13 13"><defs><linearGradient id="cb" x1="0" y1="0" x2="1" y2="1"><stop offset="0" stop-color="#fff"/><stop offset="1" stop-color="#c4d8ee"/></linearGradient></defs><rect x="0.5" y="0.5" width="12" height="12" fill="url(#cb)" stroke="#7a8a99"/><rect x="3.2" y="5.2" width="2" height="4.6" fill="#111"/><path d="M4.6 9.5 L9.8 3.2" stroke="#111" stroke-width="1.5" fill="none"/></svg>
<div style="left:630.00px;top:250px;line-height:15px;font-size:13px;color:#333333;letter-spacing:0.330px;white-space:pre;">Enabled</div>
<div style="left:736px;top:248px;width:53px;height:19px;background:#ff6600"></div>
<div style="left:737.00px;top:250px;line-height:15px;font-size:13px;color:#000;letter-spacing:0.153px;white-space:pre;">Prio</div>
<svg style="left:810px;top:251px" width="13" height="13" viewBox="0 0 13 13"><defs><linearGradient id="cb" x1="0" y1="0" x2="1" y2="1"><stop offset="0" stop-color="#fff"/><stop offset="1" stop-color="#c4d8ee"/></linearGradient></defs><rect x="0.5" y="0.5" width="12" height="12" fill="url(#cb)" stroke="#7a8a99"/></svg>
<svg style="left:259px;top:273px" width="13" height="9" viewBox="0 0 13 9"><circle cx="5" cy="4.5" r="2.3" fill="#fff" stroke="#4a6fbd" stroke-width="1.9"/><rect x="7" y="3.5" width="4.5" height="2" fill="#4a6fbd"/></svg>
<div style="left:273.00px;top:270px;line-height:15px;font-size:13px;color:#333333;letter-spacing:-0.120px;white-space:pre;">LAN6</div>
<div style="left:363.00px;top:270px;line-height:15px;font-size:13px;color:#333333;letter-spacing:0.420px;white-space:pre;">vpls-std</div>
<div style="left:417.00px;top:270px;line-height:15px;font-size:13px;color:#333333;letter-spacing:0.473px;white-space:pre;">0000...</div>
<div style="left:471.00px;top:270px;line-height:15px;font-size:13px;color:#333333;letter-spacing:0.274px;white-space:pre;">Deplo...</div>
<div style="left:540.00px;top:270px;line-height:15px;font-size:13px;color:#333333;letter-spacing:-0.680px;white-space:pre;">Up</div>
<svg style="left:596px;top:271px" width="13" height="13" viewBox="0 0 13 13"><defs><linearGradient id="cb" x1="0" y1="0" x2="1" y2="1"><stop offset="0" stop-color="#fff"/><stop offset="1" stop-color="#c4d8ee"/></linearGradient></defs><rect x="0.5" y="0.5" width="12" height="12" fill="url(#cb)" stroke="#7a8a99"/><rect x="3.2" y="5.2" width="2" height="4.6" fill="#111"/><path d="M4.6 9.5 L9.8 3.2" stroke="#111" stroke-width="1.5" fill="none"/></svg>
<div style="left:630.00px;top:270px;line-height:15px;font-size:13px;color:#333333;letter-spacing:0.330px;white-space:pre;">Enabled</div>
<div style="left:736px;top:268px;width:53px;height:19px;background:#00ff66"></div>
<div style="left:737.00px;top:270px;line-height:15px;font-size:13px;color:#000;letter-spacing:-0.760px;white-space:pre;">STD</div>
<svg style="left:810px;top:271px" width="13" height="13" viewBox="0 0 13 13"><defs><linearGradient id="cb" x1="0" y1="0" x2="1" y2="1"><stop offset="0" stop-color="#fff"/><stop offset="1" stop-color="#c4d8ee"/></linearGradient></defs><rect x="0.5" y="0.5" width="12" height="12" fill="url(#cb)" stroke="#7a8a99"/></svg>
<svg style="left:259px;top:293px" width="13" height="9" viewBox="0 0 13 9"><circle cx="5" cy="4.5" r="2.3" fill="#fff" stroke="#4a6fbd" stroke-width="1.9"/><rect x="7" y="3.5" width="4.5" height="2" fill="#4a6fbd"/></svg>
<div style="left:272.00px;top:290px;line-height:15px;font-size:13px;color:#333333;letter-spacing:-0.375px;white-space:pre;">VP...</div>
<div style="left:363.00px;top:290px;line-height:15px;font-size:13px;color:#333333;letter-spacing:-0.154px;white-space:pre;">VPLS-...</div>
<div style="left:417.00px;top:290px;line-height:15px;font-size:13px;color:#333333;letter-spacing:0.473px;white-space:pre;">0000...</div>
<div style="left:471.00px;top:290px;line-height:15px;font-size:13px;color:#333333;letter-spacing:0.274px;white-space:pre;">Deplo...</div>
<div style="left:540.00px;top:290px;line-height:15px;font-size:13px;color:#333333;letter-spacing:-0.680px;white-space:pre;">Up</div>
<svg style="left:596px;top:291px" width="13" height="13" viewBox="0 0 13 13"><defs><linearGradient id="cb" x1="0" y1="0" x2="1" y2="1"><stop offset="0" stop-color="#fff"/><stop offset="1" stop-color="#c4d8ee"/></linearGradient></defs><rect x="0.5" y="0.5" width="12" height="12" fill="url(#cb)" stroke="#7a8a99"/><rect x="3.2" y="5.2" width="2" height="4.6" fill="#111"/><path d="M4.6 9.5 L9.8 3.2" stroke="#111" stroke-width="1.5" fill="none"/></svg>
<div style="left:630.00px;top:290px;line-height:15px;font-size:13px;color:#333333;letter-spacing:0.330px;white-space:pre;">Enabled</div>
<div style="left:736px;top:288px;width:53px;height:19px;background:#ff6600"></div>
<div style="left:737.00px;top:290px;line-height:15px;font-size:13px;color:#000;letter-spacing:0.153px;white-space:pre;">Prio</div>
<svg style="left:810px;top:291px" width="13" height="13" viewBox="0 0 13 13"><defs><linearGradient id="cb" x1="0" y1="0" x2="1" y2="1"><stop offset="0" stop-color="#fff"/><stop offset="1" stop-color="#c4d8ee"/></linearGradient></defs><rect x="0.5" y="0.5" width="12" height="12" fill="url(#cb)" stroke="#7a8a99"/></svg>
<svg style="left:259px;top:313px" width="13" height="9" viewBox="0 0 13 9"><circle cx="5" cy="4.5" r="2.3" fill="#fff" stroke="#4a6fbd" stroke-width="1.9"/><rect x="7" y="3.5" width="4.5" height="2" fill="#4a6fbd"/></svg>
<div style="left:273.00px;top:310px;line-height:15px;font-size:13px;color:#333333;letter-spacing:-0.120px;white-space:pre;">LAN7</div>
<div style="left:363.00px;top:310px;line-height:15px;font-size:13px;color:#333333;letter-spacing:-0.154px;white-space:pre;">VPLS-...</div>
<div style="left:417.00px;top:310px;line-height:15px;font-size:13px;color:#333333;letter-spacing:0.473px;white-space:pre;">0000...</div>
<div style="left:471.00px;top:310px;line-height:15px;font-size:13px;color:#333333;letter-spacing:0.274px;white-space:pre;">Deplo...</div>
<div style="left:540.00px;top:310px;line-height:15px;font-size:13px;color:#333333;letter-spacing:-0.680px;white-space:pre;">Up</div>
<svg style="left:596px;top:311px" width="13" height="13" viewBox="0 0 13 13"><defs><linearGradient id="cb" x1="0" y1="0" x2="1" y2="1"><stop offset="0" stop-color="#fff"/><stop offset="1" stop-color="#c4d8ee"/></linearGradient></defs><rect x="0.5" y="0.5" width="12" height="12" fill="url(#cb)" stroke="#7a8a99"/><rect x="3.2" y="5.2" width="2" height="4.6" fill="#111"/><path d="M4.6 9.5 L9.8 3.2" stroke="#111" stroke-width="1.5" fill="none"/></svg>
<div style="left:630.00px;top:310px;line-height:15px;font-size:13px;color:#333333;letter-spacing:0.330px;white-space:pre;">Enabled</div>
<div style="left:736px;top:308px;width:53px;height:19px;background:#ff6600"></div>
<div style="left:737.00px;top:310px;line-height:15px;font-size:13px;color:#000;letter-spacing:0.153px;white-space:pre;">Prio</div>
<svg style="left:810px;top:311px" width="13" height="13" viewBox="0 0 13 13"><defs><linearGradient id="cb" x1="0" y1="0" x2="1" y2="1"><stop offset="0" stop-color="#fff"/><stop offset="1" stop-color="#c4d8ee"/></linearGradient></defs><rect x="0.5" y="0.5" width="12" height="12" fill="url(#cb)" stroke="#7a8a99"/></svg>
<svg style="left:259px;top:333px" width="13" height="9" viewBox="0 0 13 9"><circle cx="5" cy="4.5" r="2.3" fill="#fff" stroke="#4a6fbd" stroke-width="1.9"/><rect x="7" y="3.5" width="4.5" height="2" fill="#4a6fbd"/></svg>
<div style="left:273.00px;top:330px;line-height:15px;font-size:13px;color:#333333;letter-spacing:-0.120px;white-space:pre;">LAN5</div>
<div style="left:363.00px;top:330px;line-height:15px;font-size:13px;color:#333333;letter-spacing:0.367px;white-space:pre;">vpls-c...</div>
<div style="left:417.00px;top:330px;line-height:15px;font-size:13px;color:#333333;letter-spacing:0.473px;white-space:pre;">0000...</div>
<div style="left:471.00px;top:330px;line-height:15px;font-size:13px;color:#333333;letter-spacing:0.274px;white-space:pre;">Deplo...</div>
<div style="left:540.00px;top:330px;line-height:15px;font-size:13px;color:#333333;letter-spacing:-0.680px;white-space:pre;">Up</div>
<svg style="left:596px;top:331px" width="13" height="13" viewBox="0 0 13 13"><defs><linearGradient id="cb" x1="0" y1="0" x2="1" y2="1"><stop offset="0" stop-color="#fff"/><stop offset="1" stop-color="#c4d8ee"/></linearGradient></defs><rect x="0.5" y="0.5" width="12" height="12" fill="url(#cb)" stroke="#7a8a99"/><rect x="3.2" y="5.2" width="2" height="4.6" fill="#111"/><path d="M4.6 9.5 L9.8 3.2" stroke="#111" stroke-width="1.5" fill="none"/></svg>
<div style="left:630.00px;top:330px;line-height:15px;font-size:13px;color:#333333;letter-spacing:0.330px;white-space:pre;">Enabled</div>
<div style="left:736px;top:328px;width:53px;height:19px;background:#ff0033"></div>
<div style="left:737.00px;top:330px;line-height:15px;font-size:13px;color:#fff;letter-spacing:0.120px;white-space:pre;">Missio...</div>
<svg style="left:810px;top:331px" width="13" height="13" viewBox="0 0 13 13"><defs><linearGradient id="cb" x1="0" y1="0" x2="1" y2="1"><stop offset="0" stop-color="#fff"/><stop offset="1" stop-color="#c4d8ee"/></linearGradient></defs><rect x="0.5" y="0.5" width="12" height="12" fill="url(#cb)" stroke="#7a8a99"/></svg>
<svg style="left:259px;top:353px" width="13" height="9" viewBox="0 0 13 9"><circle cx="5" cy="4.5" r="2.3" fill="#fff" stroke="#4a6fbd" stroke-width="1.9"/><rect x="7" y="3.5" width="4.5" height="2" fill="#4a6fbd"/></svg>
<div style="left:273.00px;top:350px;line-height:15px;font-size:13px;color:#333333;letter-spacing:-0.120px;white-space:pre;">LAN3</div>
<div style="left:363.00px;top:350px;line-height:15px;font-size:13px;color:#333333;letter-spacing:-0.154px;white-space:pre;">VPLS-...</div>
<div style="left:417.00px;top:350px;line-height:15px;font-size:13px;color:#333333;letter-spacing:0.473px;white-space:pre;">0000...</div>
<div style="left:471.00px;top:350px;line-height:15px;font-size:13px;color:#333333;letter-spacing:0.274px;white-space:pre;">Deplo...</div>
<div style="left:540.00px;top:350px;line-height:15px;font-size:13px;color:#333333;letter-spacing:-0.680px;white-space:pre;">Up</div>
<svg style="left:596px;top:351px" width="13" height="13" viewBox="0 0 13 13"><defs><linearGradient id="cb" x1="0" y1="0" x2="1" y2="1"><stop offset="0" stop-color="#fff"/><stop offset="1" stop-color="#c4d8ee"/></linearGradient></defs><rect x="0.5" y="0.5" width="12" height="12" fill="url(#cb)" stroke="#7a8a99"/><rect x="3.2" y="5.2" width="2" height="4.6" fill="#111"/><path d="M4.6 9.5 L9.8 3.2" stroke="#111" stroke-width="1.5" fill="none"/></svg>
<div style="left:630.00px;top:350px;line-height:15px;font-size:13px;color:#333333;letter-spacing:0.330px;white-space:pre;">Enabled</div>
<div style="left:736px;top:348px;width:53px;height:19px;background:#ff6600"></div>
<div style="left:737.00px;top:350px;line-height:15px;font-size:13px;color:#000;letter-spacing:0.153px;white-space:pre;">Prio</div>
<svg style="left:810px;top:351px" width="13" height="13" viewBox="0 0 13 13"><defs><linearGradient id="cb" x1="0" y1="0" x2="1" y2="1"><stop offset="0" stop-color="#fff"/><stop offset="1" stop-color="#c4d8ee"/></linearGradient></defs><rect x="0.5" y="0.5" width="12" height="12" fill="url(#cb)" stroke="#7a8a99"/></svg>
<div style="left:843px;top:208px;width:15px;height:270px;background:#eeeeee"></div>
<div style="left:843px;top:208px;width:1px;height:270px;background:#7a8a99"></div>
<div style="left:844px;top:208px;width:14px;height:15px;background:#eeeeee"></div>
<div style="left:844px;top:208px;width:14px;height:1px;background:#ffffff"></div>
<div style="left:844px;top:208px;width:1px;height:15px;background:#ffffff"></div>
<div style="left:844px;top:223px;width:14px;height:1px;background:#7a8a99"></div>
<div style="left:844px;top:224px;width:1px;height:238px;background:#b8cfe5"></div>
<div style="left:845px;top:224px;width:13px;height:1px;background:#b8cfe5"></div>
<svg style="left:844px;top:208px" width="14" height="15" viewBox="0 0 14 15"><polygon points="2.5,8.5 10.5,8.5 6.5,4.5" fill="#222"/></svg>
<div style="left:844px;top:462px;width:14px;height:1px;background:#7a8a99"></div>
<div style="left:844px;top:463px;width:14px;height:15px;background:#eeeeee"></div>
<div style="left:844px;top:463px;width:14px;height:1px;background:#ffffff"></div>
<div style="left:844px;top:463px;width:1px;height:15px;background:#ffffff"></div>
<svg style="left:844px;top:463px" width="14" height="14" viewBox="0 0 14 14"><polygon points="2.5,5.2 10.5,5.2 6.5,9" fill="#222"/></svg>
<div style="left:254px;top:188px;width:1px;height:291px;background:#7a8a99"></div>
<div style="left:858px;top:188px;width:1px;height:291px;background:#7a8a99"></div>
<div style="left:254px;top:478px;width:605px;height:1px;background:#7a8a99"></div>
<div style="left:843px;top:477px;width:16px;height:2px;background:#7a8a99"></div>
<div style="left:254.70px;top:485px;line-height:15px;font-size:13px;color:#222;letter-spacing:0.671px;white-space:pre;font-weight:bold;">Entries:</div>
<div style="left:312.40px;top:485px;line-height:15px;font-size:13px;color:#333333;letter-spacing:0.475px;white-space:pre;">Total</div>
<div style="left:402.50px;top:485px;line-height:15px;font-size:13px;color:#333333;letter-spacing:0.386px;white-space:pre;">Filtered</div>
<div style="left:508.60px;top:485px;line-height:15px;font-size:13px;color:#333333;letter-spacing:0.400px;white-space:pre;">Selected</div>
<div style="left:346px;top:483px;width:48px;height:19px;background:#ffffff"></div>
<div style="left:346px;top:483px;width:48px;height:19px;box-shadow:inset 0 0 0 1px #b8cfe5"></div>
<div style="left:381.34px;top:485px;line-height:15px;font-size:13px;color:#222;letter-spacing:1.160px;white-space:pre;">8</div>
<div style="left:452px;top:483px;width:48px;height:19px;background:#ffffff"></div>
<div style="left:452px;top:483px;width:48px;height:19px;box-shadow:inset 0 0 0 1px #b8cfe5"></div>
<div style="left:487.34px;top:485px;line-height:15px;font-size:13px;color:#222;letter-spacing:1.160px;white-space:pre;">8</div>
<div style="left:566px;top:483px;width:48px;height:19px;background:#ffffff"></div>
<div style="left:566px;top:483px;width:48px;height:19px;box-shadow:inset 0 0 0 1px #b8cfe5"></div>
<div style="left:601.34px;top:485px;line-height:15px;font-size:13px;color:#222;letter-spacing:1.160px;white-space:pre;">0</div>
</body></html>
